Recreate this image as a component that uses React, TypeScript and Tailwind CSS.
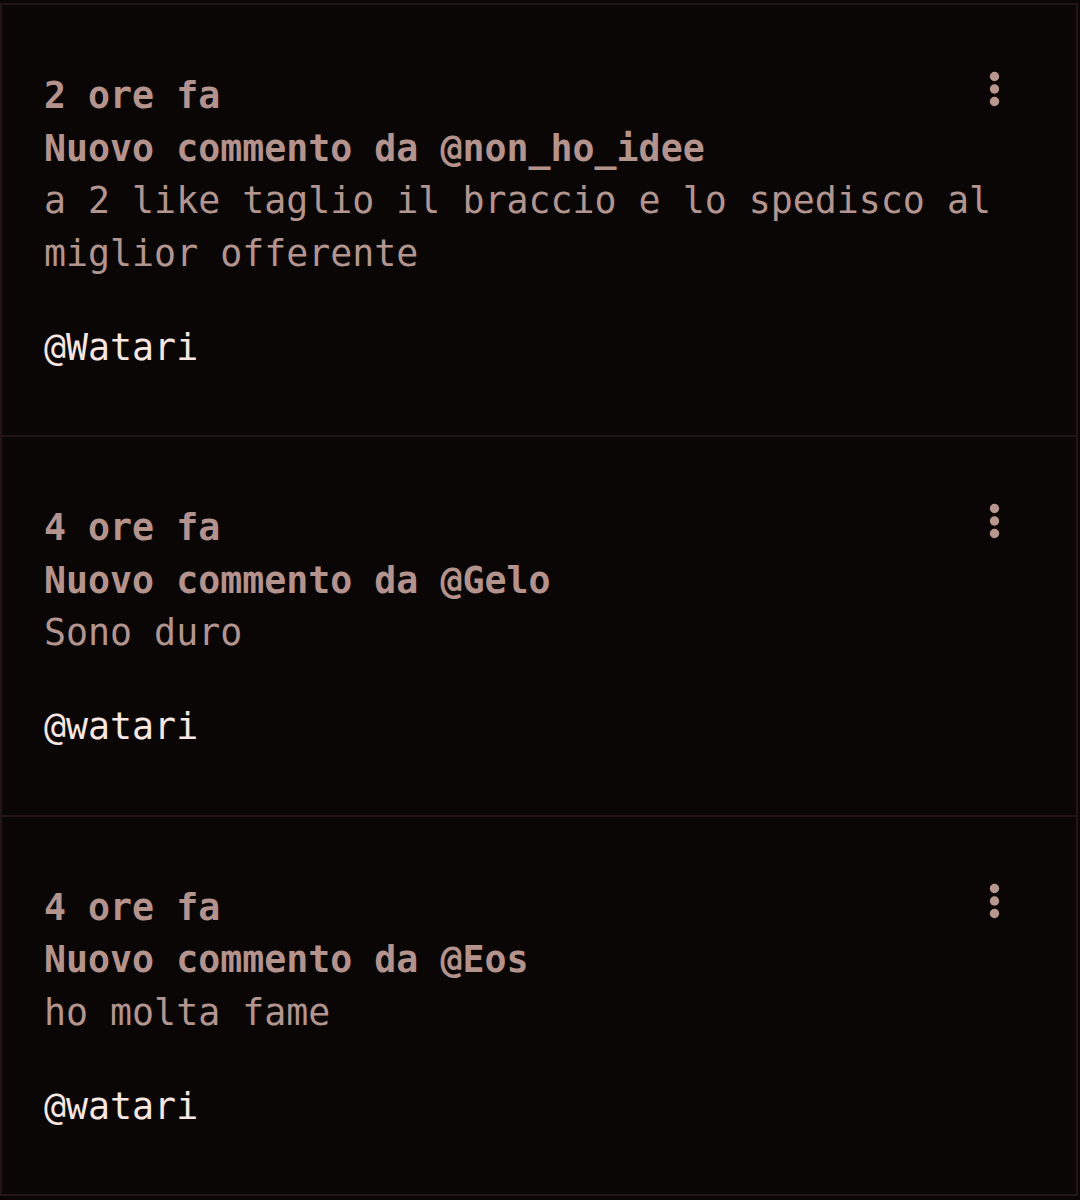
import React from "react";

type Item = { time: string; user: string; body: string[]; mention: string };

const items: Item[] = [
  {
    time: "2 ore fa",
    user: "@non_ho_idee",
    body: ["a 2 like taglio il braccio e lo spedisco al", "miglior offerente"],
    mention: "@Watari",
  },
  { time: "4 ore fa", user: "@Gelo", body: ["Sono duro"], mention: "@watari" },
  { time: "4 ore fa", user: "@Eos", body: ["ho molta fame"], mention: "@watari" },
];

function Kebab() {
  return (
    <svg
      className="absolute left-[987px] top-[66px]"
      width="11"
      height="36"
      viewBox="0 0 11 36"
    >
      <circle cx="5.5" cy="5.5" r="4.7" fill="#b8978f" />
      <circle cx="5.5" cy="18" r="4.7" fill="#b8978f" />
      <circle cx="5.5" cy="30.5" r="4.7" fill="#b8978f" />
    </svg>
  );
}

export default function App() {
  return (
    <div
      className="min-h-[1200px] w-[1080px] bg-[#0a0606] pt-[3px]"
      style={{ fontFamily: '"DejaVu Sans Mono", "Liberation Mono", monospace' }}
    >
      <div className="w-[1078px] border-2 border-[#231515]">
        {items.map((it, i) => (
          <div
            key={i}
            className={`relative pl-[42px] pt-[65px] pb-[61px] ${i > 0 ? "border-t-2 border-[#231515]" : ""}`}
          >
            <Kebab />
            <div className="text-[36.6px] leading-[52.5px] font-bold text-[#b3938c]">{it.time}</div>
            <div className="text-[36.6px] leading-[52.5px] font-bold text-[#b3938c] whitespace-pre">
              Nuovo commento da {it.user}
            </div>
            {it.body.map((b, j) => (
              <div key={j} className="text-[36.6px] leading-[52.5px] text-[#b3958f] whitespace-pre">
                {b}
              </div>
            ))}
            <div className="mt-[41.5px] text-[36.6px] leading-[52.5px] text-[#f7e6e2]">{it.mention}</div>
          </div>
        ))}
      </div>
    </div>
  );
}
